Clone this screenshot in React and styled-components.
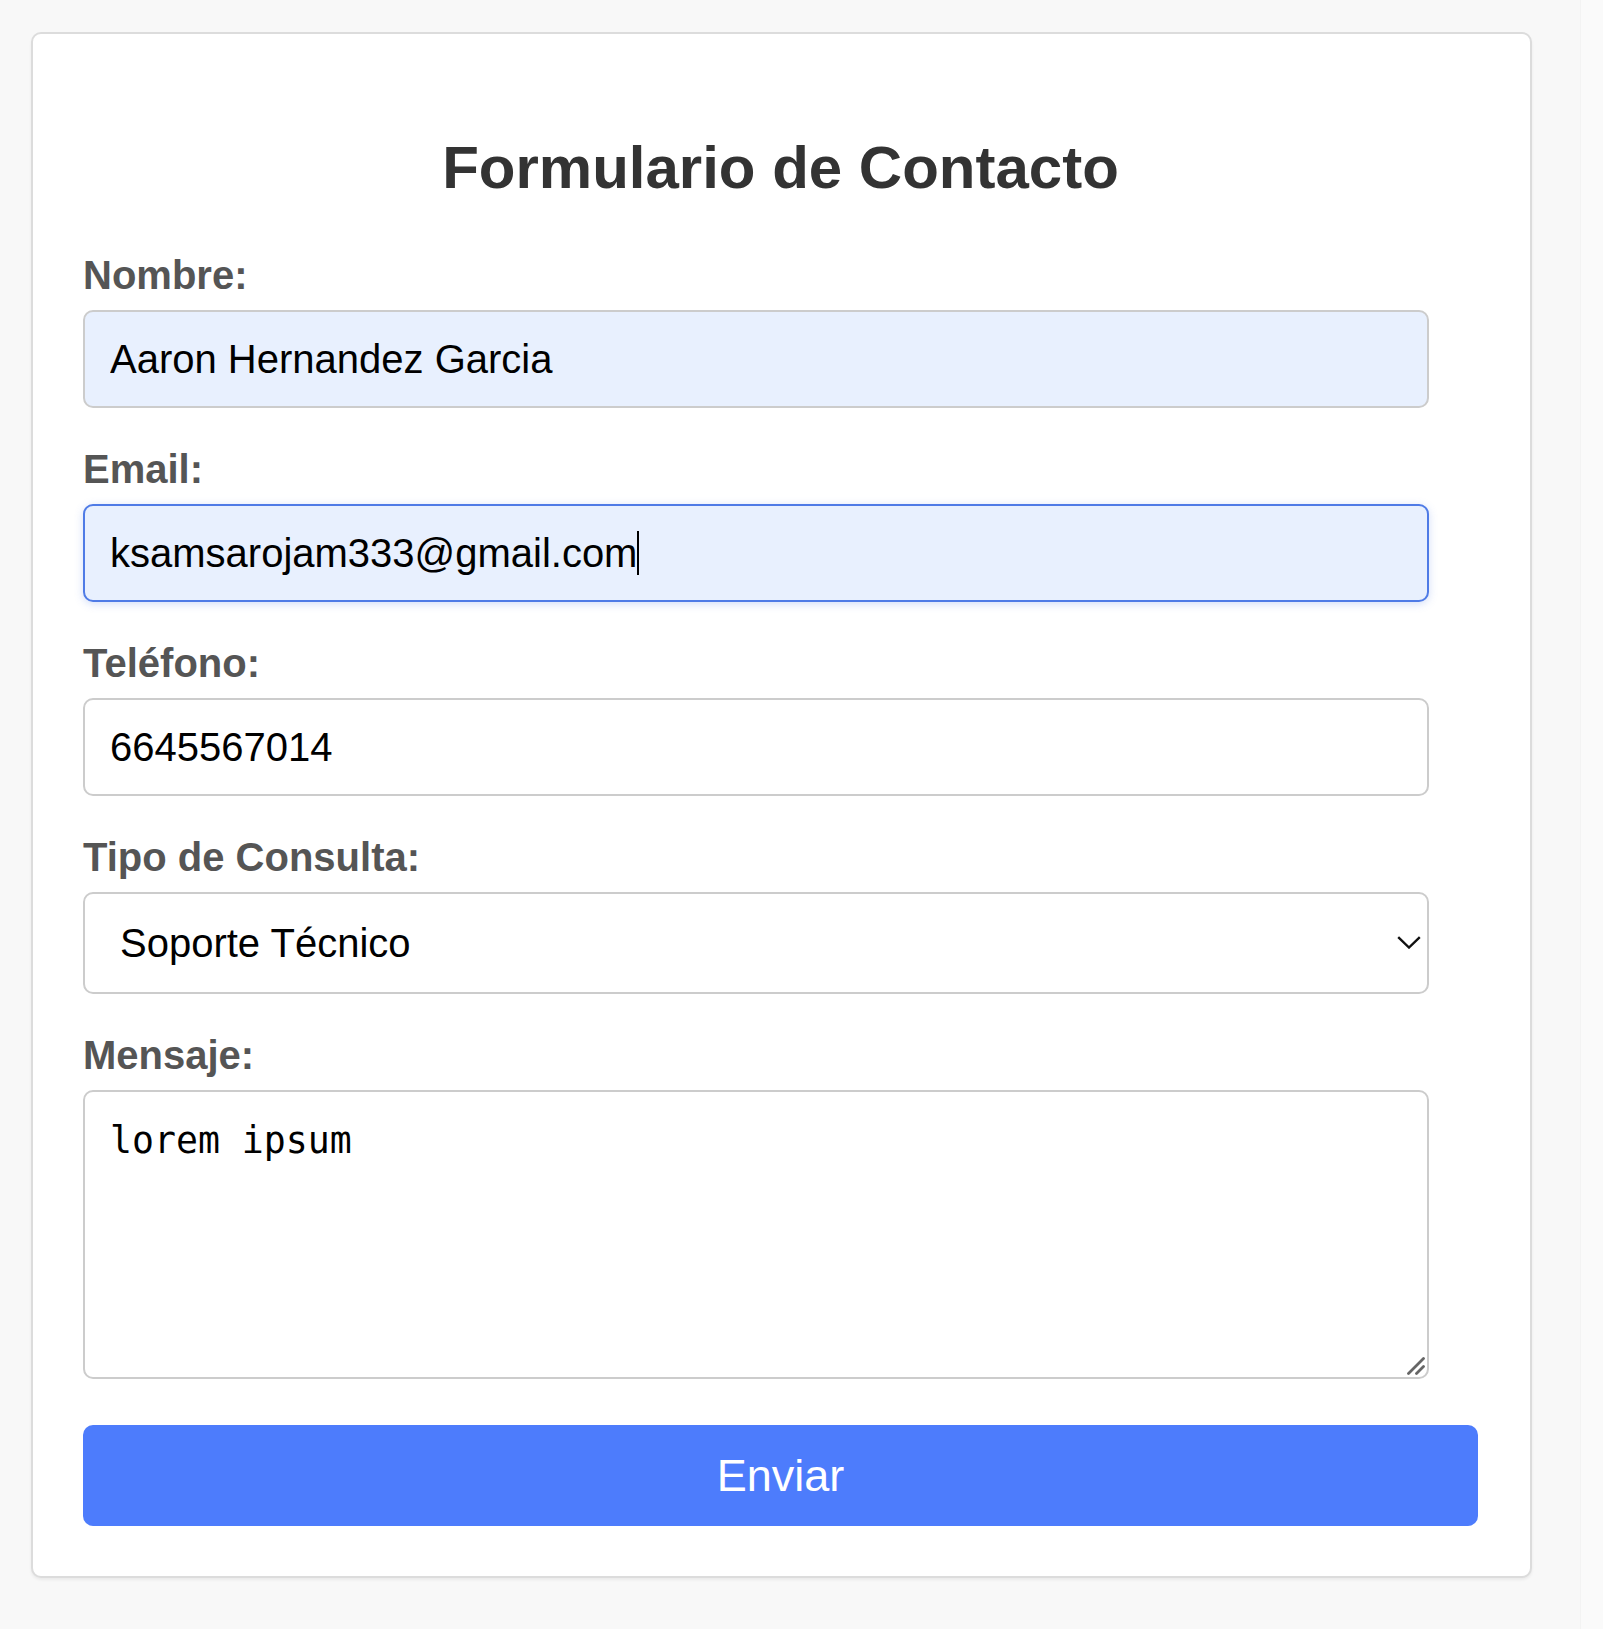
import styled, { createGlobalStyle } from "styled-components";

const GlobalStyle = createGlobalStyle`
  body {
    margin: 0;
    background: #f8f8f8;
    font-family: "Liberation Sans", Arial, sans-serif;
  }
`;

export default function App() {
  return (
    <>
      <GlobalStyle />
      <Page>
        <Main>
          <Card>
            <Title>Formulario de Contacto</Title>
            <form onSubmit={(e) => e.preventDefault()}>
              <Field>
                <Label htmlFor="nombre">Nombre:</Label>
                <TextInput id="nombre" type="text" $autofill defaultValue="Aaron Hernandez Garcia" />
              </Field>
              <Field>
                <Label htmlFor="email">Email:</Label>
                <CaretWrap>
                  <TextInput id="email" type="email" $autofill $focused defaultValue="ksamsarojam333@gmail.com" />
                  <Caret />
                </CaretWrap>
              </Field>
              <Field>
                <Label htmlFor="telefono">Teléfono:</Label>
                <TextInput id="telefono" type="tel" defaultValue="6645567014" />
              </Field>
              <Field>
                <Label htmlFor="tipo">Tipo de Consulta:</Label>
                <ControlWrap>
                  <Select id="tipo" defaultValue="soporte">
                    <option value="general">Consulta General</option>
                    <option value="soporte">Soporte Técnico</option>
                    <option value="ventas">Ventas</option>
                  </Select>
                  <Chevron viewBox="0 0 24 13" aria-hidden="true">
                    <path d="M1.2 1.2 L12 11.5 L22.8 1.2" />
                  </Chevron>
                </ControlWrap>
              </Field>
              <Field>
                <Label htmlFor="mensaje">Mensaje:</Label>
                <ControlWrap>
                  <TextArea id="mensaje" defaultValue="lorem ipsum" />
                  <Grip viewBox="0 0 18 18" aria-hidden="true">
                    <path d="M1.5 16.5 L16.5 1.5 M9.5 16.5 L16.5 9.5" />
                  </Grip>
                </ControlWrap>
              </Field>
              <SubmitButton type="submit">Enviar</SubmitButton>
            </form>
          </Card>
        </Main>
        <ScrollTrack />
      </Page>
    </>
  );
}

const Page = styled.div`
  display: flex;
  min-height: 1629px;
`;

const Main = styled.div`
  flex: 1;
  padding: 32px 0 0 31px;
`;

const ScrollTrack = styled.div`
  width: 22px;
  background: #fafafa;
  border-left: 1px solid #f3f3f3;
`;

const Card = styled.div`
  box-sizing: border-box;
  width: 1501px;
  height: 1546px;
  padding: 50px 52px 50px 50px;
  background: #fff;
  border: 2px solid #dcdcdc;
  border-radius: 10px;
  box-shadow: 0 2px 3px rgba(0, 0, 0, 0.06);
`;

const Title = styled.h2`
  margin: 49px 0 50px;
  font-size: 60px;
  line-height: 69px;
  font-weight: 700;
  text-align: center;
  color: #333;
`;

const Field = styled.div`
  margin-bottom: 38px;
`;

const Label = styled.label`
  display: block;
  margin-bottom: 12px;
  font-size: 40px;
  line-height: 46px;
  font-weight: 700;
  color: #555;
`;

const TextInput = styled.input`
  box-sizing: border-box;
  display: block;
  width: 1346px;
  height: 98px;
  padding: 0 25px;
  font-family: "Liberation Sans", Arial, sans-serif;
  font-size: 40px;
  color: #000;
  background: ${(p) => (p.$autofill ? "#e8f0fe" : "#fff")};
  border: 2px solid ${(p) => (p.$focused ? "#4f7be6" : "#cccccc")};
  border-radius: 10px;
  box-shadow: ${(p) => (p.$focused ? "0 2px 8px rgba(79, 123, 230, 0.25)" : "none")};
  outline: none;
`;

const CaretWrap = styled.div`
  position: relative;
`;

const Caret = styled.span`
  position: absolute;
  left: 554px;
  top: 27px;
  width: 2px;
  height: 44px;
  background: #000;
`;

const ControlWrap = styled.div`
  position: relative;
  width: 1346px;
`;

const Select = styled.select`
  box-sizing: border-box;
  display: block;
  width: 100%;
  height: 102px;
  padding: 0 25px 0 35px;
  font-family: "Liberation Sans", Arial, sans-serif;
  font-size: 40px;
  color: #000;
  background: #fff;
  border: 2px solid #cccccc;
  border-radius: 10px;
  appearance: none;
  outline: none;
`;

const Chevron = styled.svg`
  position: absolute;
  right: 8px;
  top: 44px;
  width: 24px;
  height: 13px;
  fill: none;
  stroke: #111;
  stroke-width: 2.4;
  pointer-events: none;
`;

const TextArea = styled.textarea`
  box-sizing: border-box;
  display: block;
  width: 100%;
  height: 289px;
  padding: 27px 25px 25px;
  font-family: "DejaVu Sans Mono", "Liberation Mono", monospace;
  font-size: 36.5px;
  color: #000;
  background: #fff;
  border: 2px solid #cccccc;
  border-radius: 10px;
  resize: none;
  outline: none;
`;

const Grip = styled.svg`
  position: absolute;
  right: 4px;
  bottom: 4px;
  width: 18px;
  height: 18px;
  fill: none;
  stroke: #666;
  stroke-width: 2.8;
  stroke-linecap: round;
  pointer-events: none;
`;

const SubmitButton = styled.button`
  display: block;
  width: 100%;
  height: 101px;
  margin-top: 46px;
  font-family: "Liberation Sans", Arial, sans-serif;
  font-size: 45px;
  color: #fff;
  background: #4d7cfc;
  border: none;
  border-radius: 10px;
  cursor: pointer;
`;
